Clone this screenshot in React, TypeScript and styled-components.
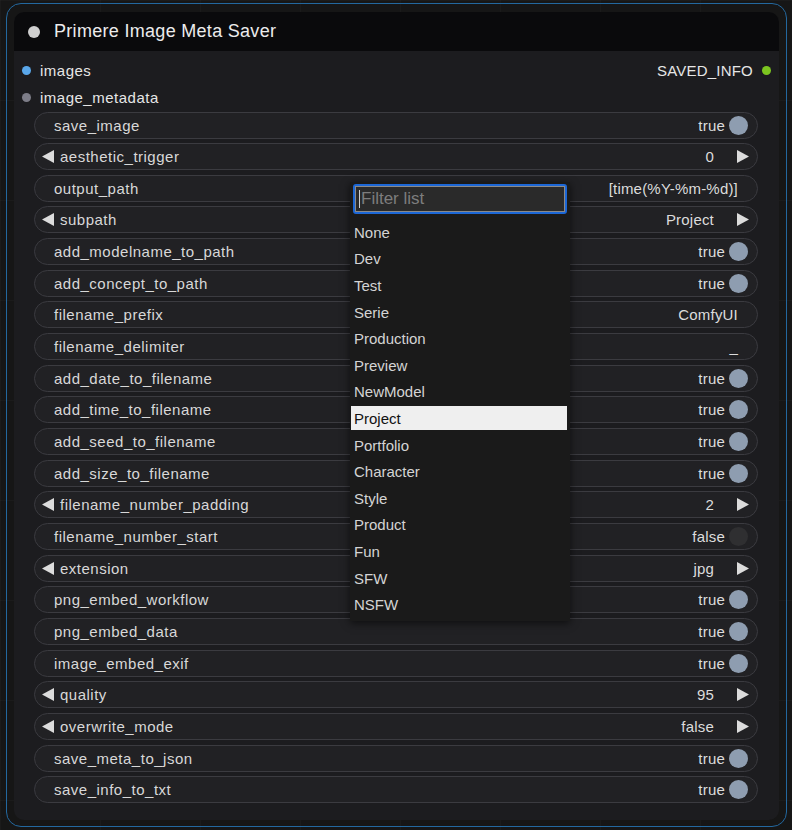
import styled, { createGlobalStyle } from 'styled-components'

const GlobalStyle = createGlobalStyle`
  html, body {
    margin: 0;
    padding: 0;
    background: #161616;
  }
`

type Widget =
  | { name: string; kind: 'toggle'; value: boolean }
  | { name: string; kind: 'combo'; value: string }
  | { name: string; kind: 'text'; value: string }

const widgets: Widget[] = [
  { name: 'save_image', kind: 'toggle', value: true },
  { name: 'aesthetic_trigger', kind: 'combo', value: '0' },
  { name: 'output_path', kind: 'text', value: '[time(%Y-%m-%d)]' },
  { name: 'subpath', kind: 'combo', value: 'Project' },
  { name: 'add_modelname_to_path', kind: 'toggle', value: true },
  { name: 'add_concept_to_path', kind: 'toggle', value: true },
  { name: 'filename_prefix', kind: 'text', value: 'ComfyUI' },
  { name: 'filename_delimiter', kind: 'text', value: '_' },
  { name: 'add_date_to_filename', kind: 'toggle', value: true },
  { name: 'add_time_to_filename', kind: 'toggle', value: true },
  { name: 'add_seed_to_filename', kind: 'toggle', value: true },
  { name: 'add_size_to_filename', kind: 'toggle', value: true },
  { name: 'filename_number_padding', kind: 'combo', value: '2' },
  { name: 'filename_number_start', kind: 'toggle', value: false },
  { name: 'extension', kind: 'combo', value: 'jpg' },
  { name: 'png_embed_workflow', kind: 'toggle', value: true },
  { name: 'png_embed_data', kind: 'toggle', value: true },
  { name: 'image_embed_exif', kind: 'toggle', value: true },
  { name: 'quality', kind: 'combo', value: '95' },
  { name: 'overwrite_mode', kind: 'combo', value: 'false' },
  { name: 'save_meta_to_json', kind: 'toggle', value: true },
  { name: 'save_info_to_txt', kind: 'toggle', value: true },
]

const options = [
  'None', 'Dev', 'Test', 'Serie', 'Production', 'Preview', 'NewModel', 'Project',
  'Portfolio', 'Character', 'Style', 'Product', 'Fun', 'SFW', 'NSFW',
]

const Canvas = styled.div`
  position: relative;
  width: 792px;
  height: 830px;
  box-sizing: border-box;
  padding: 3px 5px 3px 6px;
  overflow: hidden;
  background-color: #161616;
  background-image: linear-gradient(rgba(255, 255, 255, 0.025) 1px, transparent 1px),
    linear-gradient(90deg, rgba(255, 255, 255, 0.025) 1px, transparent 1px);
  background-size: 100px 100px;
  font-family: 'Liberation Sans', Arial, sans-serif;
`

const Outline = styled.div`
  height: 824px;
  box-sizing: border-box;
  border: 1px solid #23689f;
  border-radius: 15px;
  padding: 8px 7px 6px 7px;
`

const NodeBody = styled.div`
  height: 100%;
  box-sizing: border-box;
  background: #1c1c1f;
  border-radius: 10px;
  overflow: hidden;
  display: flex;
  flex-direction: column;
`

const TitleBar = styled.div`
  height: 39px;
  flex: none;
  background: #0a0a0c;
  display: flex;
  align-items: center;
  gap: 14px;
  padding-left: 14px;
  color: #ececec;
  font-size: 18px;
  letter-spacing: 0.3px;
`

const TitleDot = styled.span`
  width: 12px;
  height: 12px;
  border-radius: 50%;
  background: #cfcfcf;
`

const Slots = styled.div`
  padding: 5.5px 8px 0 8px;
`

const SlotRow = styled.div`
  height: 27px;
  display: flex;
  align-items: center;
  justify-content: space-between;
  color: #e6e6e6;
  font-size: 15px;
  letter-spacing: 0.5px;
`

const Slot = styled.div`
  display: flex;
  align-items: center;
  gap: 9px;
`

const OutSlot = styled(Slot)`
  letter-spacing: 0.2px;
`

const SlotDot = styled.span<{ $color: string }>`
  width: 9px;
  height: 9px;
  border-radius: 50%;
  background: ${({ $color }) => $color};
`

const Widgets = styled.div`
  display: flex;
  flex-direction: column;
  gap: 4.67px;
  padding: 1px 21px 0 20px;
`

const Row = styled.div`
  height: 27px;
  box-sizing: border-box;
  border: 1px solid #3b3b40;
  border-radius: 14px;
  background: #212124;
  display: flex;
  align-items: center;
  padding: 0 9px 0 19px;
  color: #d8d8d8;
  font-size: 15px;
  letter-spacing: 0.5px;
`

const ComboRow = styled(Row)`
  padding: 0 8px 0 7px;
`

const Label = styled.span`
  flex: 1;
`

const Value = styled.span`
  color: #dcdcdc;
  letter-spacing: 0.2px;
`

const Knob = styled.span<{ $on: boolean }>`
  width: 19px;
  height: 19px;
  border-radius: 50%;
  margin-left: 4px;
  background: ${({ $on }) => ($on ? '#8e9db0' : '#2f2f31')};
`

const Arrow = styled.svg`
  width: 12px;
  height: 13px;
  flex: none;
  fill: #dcdcdc;
`

const Menu = styled.div`
  position: absolute;
  left: 350px;
  top: 182px;
  width: 220px;
  height: 439px;
  box-sizing: border-box;
  background: #1a1a1a;
  box-shadow: 0 2px 8px rgba(0, 0, 0, 0.6);
  padding: 2px 3px 0 1px;
  font-family: 'Liberation Sans', Arial, sans-serif;
`

const Filter = styled.div`
  height: 30px;
  box-sizing: border-box;
  margin-left: 2px;
  border: 2px solid #1c67d6;
  border-radius: 3px;
`

const FilterInner = styled.div`
  height: 100%;
  box-sizing: border-box;
  border: 1px solid #8a8a8a;
  background: #2a2a2a;
  display: flex;
  align-items: center;
  padding-left: 3px;
  color: #7d7d7d;
  font-size: 17px;
`

const Caret = styled.span`
  width: 1px;
  height: 18px;
  background: #d0d0d0;
  margin-right: 1px;
`

const Items = styled.div`
  margin-top: 5px;
  display: flex;
  flex-direction: column;
`

const Item = styled.div<{ $selected?: boolean }>`
  height: 26.6px;
  display: flex;
  align-items: center;
  padding-left: 3px;
  font-size: 15px;
  color: ${({ $selected }) => ($selected ? '#111' : '#d4d4d4')};
  background: ${({ $selected }) => ($selected ? '#efefef' : 'transparent')};
  ${({ $selected }) => ($selected ? 'height: 24px; margin: 1.3px 0;' : '')}
`

function LeftArrow() {
  return (
    <Arrow viewBox="0 0 12 13" style={{ marginRight: 6 }}>
      <polygon points="12,0 12,13 0,6.5" />
    </Arrow>
  )
}

function RightArrow() {
  return (
    <Arrow viewBox="0 0 12 13" style={{ marginLeft: 23 }}>
      <polygon points="0,0 0,13 12,6.5" />
    </Arrow>
  )
}

function WidgetRow({ w }: { w: Widget }) {
  if (w.kind === 'combo') {
    return (
      <ComboRow>
        <LeftArrow />
        <Label>{w.name}</Label>
        <Value>{w.value}</Value>
        <RightArrow />
      </ComboRow>
    )
  }
  if (w.kind === 'toggle') {
    return (
      <Row>
        <Label>{w.name}</Label>
        <Value>{w.value ? 'true' : 'false'}</Value>
        <Knob $on={w.value} />
      </Row>
    )
  }
  return (
    <Row style={{ paddingRight: 19 }}>
      <Label>{w.name}</Label>
      <Value>{w.value}</Value>
    </Row>
  )
}

export default function App() {
  return (
    <>
      <GlobalStyle />
      <Canvas>
        <Outline>
          <NodeBody>
            <TitleBar>
              <TitleDot />
              Primere Image Meta Saver
            </TitleBar>
            <Slots>
              <SlotRow>
                <Slot>
                  <SlotDot $color="#5aa7ea" />
                  images
                </Slot>
                <OutSlot>
                  SAVED_INFO
                  <SlotDot $color="#7cc520" />
                </OutSlot>
              </SlotRow>
              <SlotRow>
                <Slot>
                  <SlotDot $color="#7d7d88" />
                  image_metadata
                </Slot>
              </SlotRow>
            </Slots>
            <Widgets>
              {widgets.map((w) => (
                <WidgetRow key={w.name} w={w} />
              ))}
            </Widgets>
          </NodeBody>
        </Outline>
        <Menu>
          <Filter>
            <FilterInner>
              <Caret />
              Filter list
            </FilterInner>
          </Filter>
          <Items>
            {options.map((o) => (
              <Item key={o} $selected={o === 'Project'}>
                {o}
              </Item>
            ))}
          </Items>
        </Menu>
      </Canvas>
    </>
  )
}
